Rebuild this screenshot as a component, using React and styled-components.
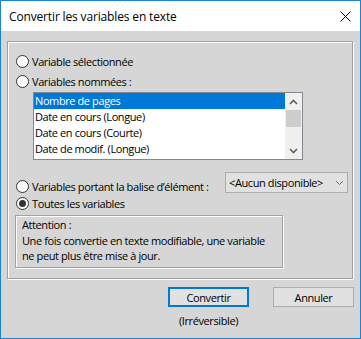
import React from 'react'
import styled, { createGlobalStyle } from 'styled-components'

const Global = createGlobalStyle`
  html, body { margin: 0; padding: 0; background: #fff; }
  body {
    font-family: "Open Sans", "Liberation Sans", sans-serif;
    font-size: 11px;
    letter-spacing: -0.4px;
    color: #000;
  }
`

const Window = styled.div`
  width: 361px;
  height: 339px;
  box-sizing: border-box;
  border: 1px solid #1883d7;
  display: flex;
  flex-direction: column;
  background: #d6d6d6;
`

const TitleBar = styled.div`
  height: 30px;
  flex: none;
  background: #fff;
  display: flex;
  align-items: center;
  justify-content: space-between;
  padding-left: 8px;
  font-size: 12px;
  letter-spacing: -0.15px;
`

const CloseBox = styled.div`
  width: 30px;
  height: 30px;
  display: flex;
  align-items: center;
  justify-content: center;
`

const Body = styled.div`
  flex: 1;
  padding: 10px 6px 0 6px;
`

const Group = styled.div`
  height: 238px;
  box-sizing: border-box;
  margin-right: 1px;
  border: 1px solid #a0a0a0;
  box-shadow: inset 1px 1px 0 #fff, 1px 1px 0 #fff;
  padding: 11px 4px 0 8px;
  display: flex;
  flex-direction: column;
`

const RadioRow = styled.label`
  display: flex;
  align-items: center;
  height: 16px;
  gap: 3px;
  margin-top: ${p => p.$mt || 0}px;
  white-space: nowrap;
`

const Circle = styled.span`
  width: 13px;
  height: 13px;
  box-sizing: border-box;
  border-radius: 50%;
  border: 1px solid #333;
  background: #fff;
  display: flex;
  align-items: center;
  justify-content: center;
  flex: none;

  &::after {
    content: '';
    width: 7px;
    height: 7px;
    border-radius: 50%;
    background: ${p => (p.$checked ? '#333' : 'transparent')};
  }
`

const ListBox = styled.div`
  margin: 3px 0 0 17px;
  width: 270px;
  height: 68px;
  box-sizing: border-box;
  border: 1px solid #828790;
  background: #fff;
  display: flex;
`

const Items = styled.div`
  flex: 1;
`

const Item = styled.div`
  height: 16px;
  line-height: 16px;
  padding-left: 1px;
  white-space: nowrap;
  background: ${p => (p.$selected ? '#0078d7' : 'transparent')};
  color: ${p => (p.$selected ? '#fff' : '#000')};
`

const ScrollBar = styled.div`
  width: 17px;
  background: #f0f0f0;
  display: flex;
  flex-direction: column;
  align-items: center;
`

const ArrowBox = styled.div`
  height: 17px;
  width: 17px;
  display: flex;
  align-items: center;
  justify-content: center;
`

const Thumb = styled.div`
  width: 15px;
  height: 17px;
  background: #cdcdcd;
`

const Track = styled.div`
  flex: 1;
`

const ComboRow = styled.div`
  display: flex;
  align-items: flex-start;
  margin-top: 12px;
  height: 21px;
`

const ComboLabel = styled(RadioRow)`
  margin-top: 6px;
`

const Combo = styled.div`
  margin-left: auto;
  width: 123px;
  height: 21px;
  box-sizing: border-box;
  border: 1px solid #adadad;
  background: #e1e1e1;
  display: flex;
  align-items: center;
  justify-content: space-between;
  padding: 0 3px 0 3px;
  white-space: nowrap;
`

const Note = styled.div`
  margin: 4px 0 0 -1px;
  width: 268px;
  height: 53px;
  box-sizing: border-box;
  border: 1px solid #a0a0a0;
  box-shadow: inset 1px 1px 0 #fff, 1px 1px 0 #fff;
  padding: 1px 0 0 6px;
  line-height: 15.5px;
`

const Footer = styled.div`
  display: flex;
  justify-content: flex-end;
  gap: 24px;
  margin-top: 8px;
`

const ButtonCol = styled.div`
  display: flex;
  flex-direction: column;
  align-items: center;
`

const Button = styled.div`
  width: 81px;
  height: 20px;
  box-sizing: border-box;
  border: ${p => (p.$default ? '2px solid #0078d7' : '1px solid #adadad')};
  background: #e1e1e1;
  display: flex;
  align-items: center;
  justify-content: center;
`

const Hint = styled.div`
  margin-top: 6px;
  line-height: 16px;
`

const Chevron = ({ up, color = '#606060', w = 1.6 }) => (
  <svg width="9" height="6" viewBox="0 0 9 6">
    <polyline
      points={up ? '1,5 4.5,1.5 8,5' : '1,1 4.5,4.5 8,1'}
      fill="none"
      stroke={color}
      strokeWidth={w}
    />
  </svg>
)

const Radio = ({ checked, children, mt }) => (
  <RadioRow $mt={mt}>
    <Circle $checked={checked} />
    <span>{children}</span>
  </RadioRow>
)

const items = [
  'Nombre de pages',
  'Date en cours (Longue)',
  'Date en cours (Courte)',
  'Date de modif. (Longue)',
]

export default function App() {
  return (
    <>
      <Global />
      <Window>
        <TitleBar>
          <span>Convertir les variables en texte</span>
          <CloseBox>
            <svg width="11" height="11" viewBox="0 0 11 11">
              <path d="M0.5 0.5 L10.5 10.5 M10.5 0.5 L0.5 10.5" stroke="#000" strokeWidth="1" />
            </svg>
          </CloseBox>
        </TitleBar>
        <Body>
          <Group>
            <Radio>Variable sélectionnée</Radio>
            <Radio mt={4}>Variables nommées :</Radio>
            <ListBox>
              <Items>
                {items.map((t, i) => (
                  <Item key={t} $selected={i === 0}>{t}</Item>
                ))}
              </Items>
              <ScrollBar>
                <ArrowBox><Chevron up /></ArrowBox>
                <Thumb />
                <Track />
                <ArrowBox><Chevron /></ArrowBox>
              </ScrollBar>
            </ListBox>
            <ComboRow>
              <ComboLabel>
                <Circle />
                <span>Variables portant la balise d’élément :</span>
              </ComboLabel>
              <Combo>
                <span>&lt;Aucun disponible&gt;</span>
                <Chevron color="#707070" w={1} />
              </Combo>
            </ComboRow>
            <Radio checked mt={2}>Toutes les variables</Radio>
            <Note>
              Attention :<br />
              Une fois convertie en texte modifiable, une variable<br />
              ne peut plus être mise à jour.
            </Note>
          </Group>
          <Footer>
            <ButtonCol>
              <Button $default>Convertir</Button>
              <Hint>(Irréversible)</Hint>
            </ButtonCol>
            <Button>Annuler</Button>
          </Footer>
        </Body>
      </Window>
    </>
  )
}
